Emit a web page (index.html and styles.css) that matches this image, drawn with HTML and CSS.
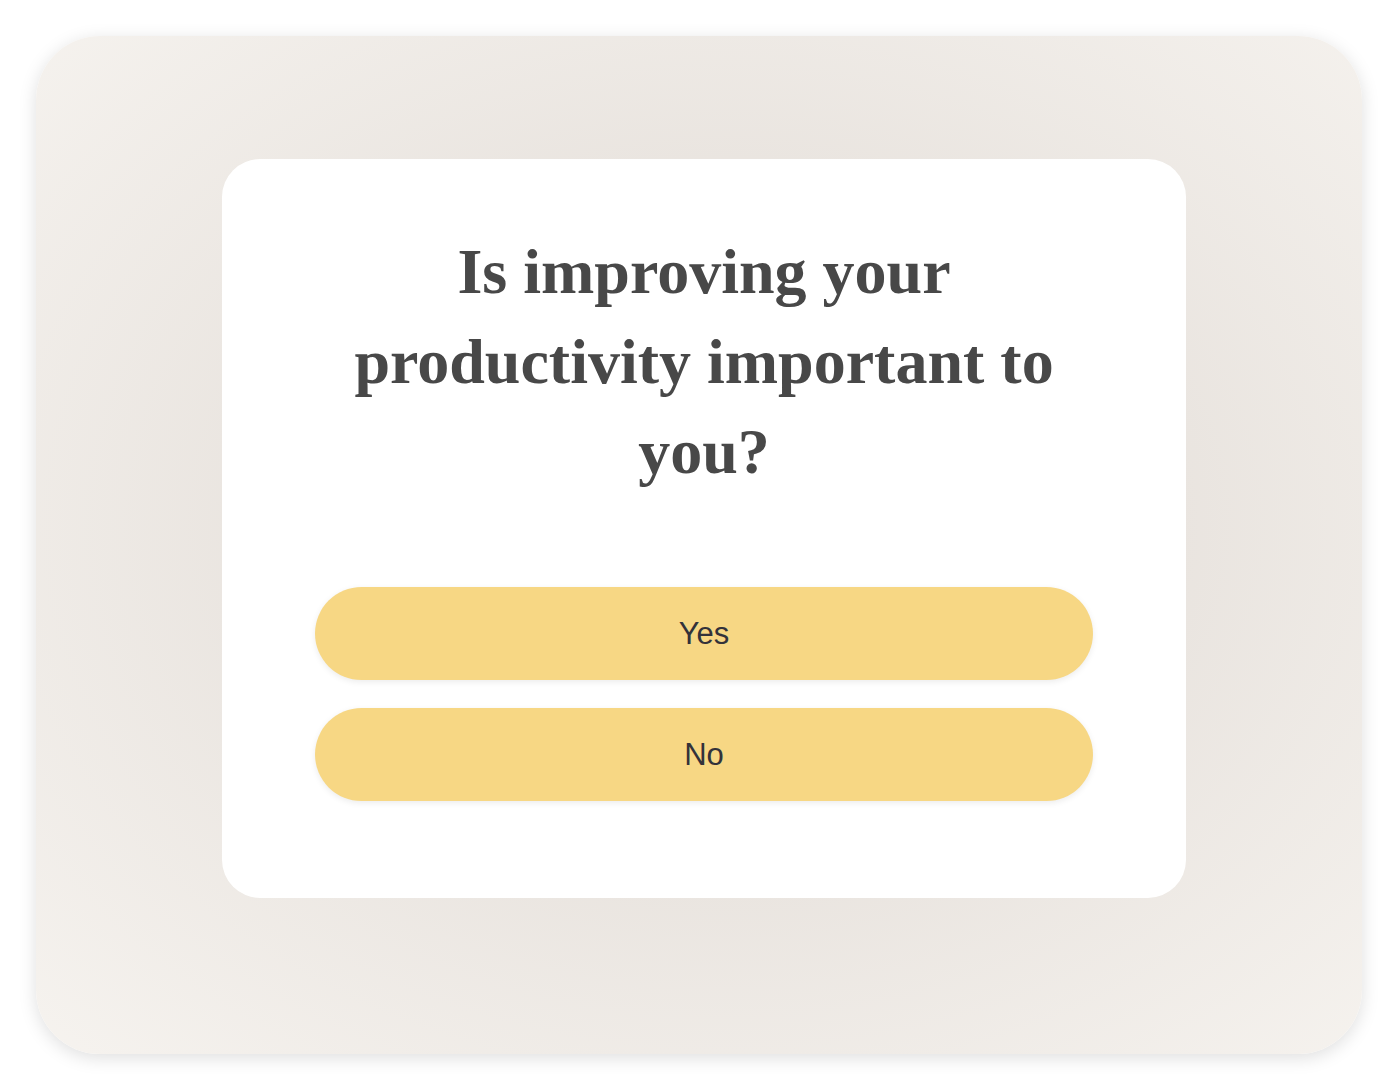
FILE: index.html
```html
<!DOCTYPE html>
<html lang="en">
<head>
    <meta charset="UTF-8">
    <meta name="viewport" content="width=device-width, initial-scale=1.0">
    <title>Productivity Quiz</title>
    <link rel="stylesheet" href="styles.css">
</head>
<body>
    <div class="frame">
        <div class="card">
            <h1 class="question">Is improving your productivity important to you?</h1>
            <div class="answers">
                <button class="answer">Yes</button>
                <button class="answer">No</button>
            </div>
        </div>
    </div>
</body>
</html>
```

FILE: styles.css
```css
* {
    margin: 0;
    padding: 0;
    box-sizing: border-box;
}

body {
    background: #fff;
    padding: 36px 36px 36px 36px;
}

.frame {
    width: 1326px;
    height: 1018px;
    border-radius: 64px;
    background: radial-gradient(ellipse at 52% 48%, #e4ddd6 0%, #e9e4df 45%, #f6f3ef 100%);
    box-shadow: 0 4px 18px rgba(0, 0, 0, 0.13);
    padding: 123px 176px 156px 186px;
}

.card {
    background: #fff;
    border-radius: 38px;
    height: 739px;
    padding: 68px 93px 0 93px;
}

.question {
    font-family: 'Liberation Serif', serif;
    font-weight: bold;
    font-size: 64px;
    line-height: 90px;
    color: #484848;
    text-align: center;
    padding: 0 20px;
}

.answers {
    margin-top: 90px;
    display: flex;
    flex-direction: column;
    gap: 28px;
}

.answer {
    height: 93px;
    border: none;
    border-radius: 47px;
    background: #f7d784;
    box-shadow: 0 2px 6px rgba(0, 0, 0, 0.08);
    font-family: 'Liberation Sans', Arial, sans-serif;
    font-size: 31px;
    color: #33323a;
    cursor: pointer;
}
```
